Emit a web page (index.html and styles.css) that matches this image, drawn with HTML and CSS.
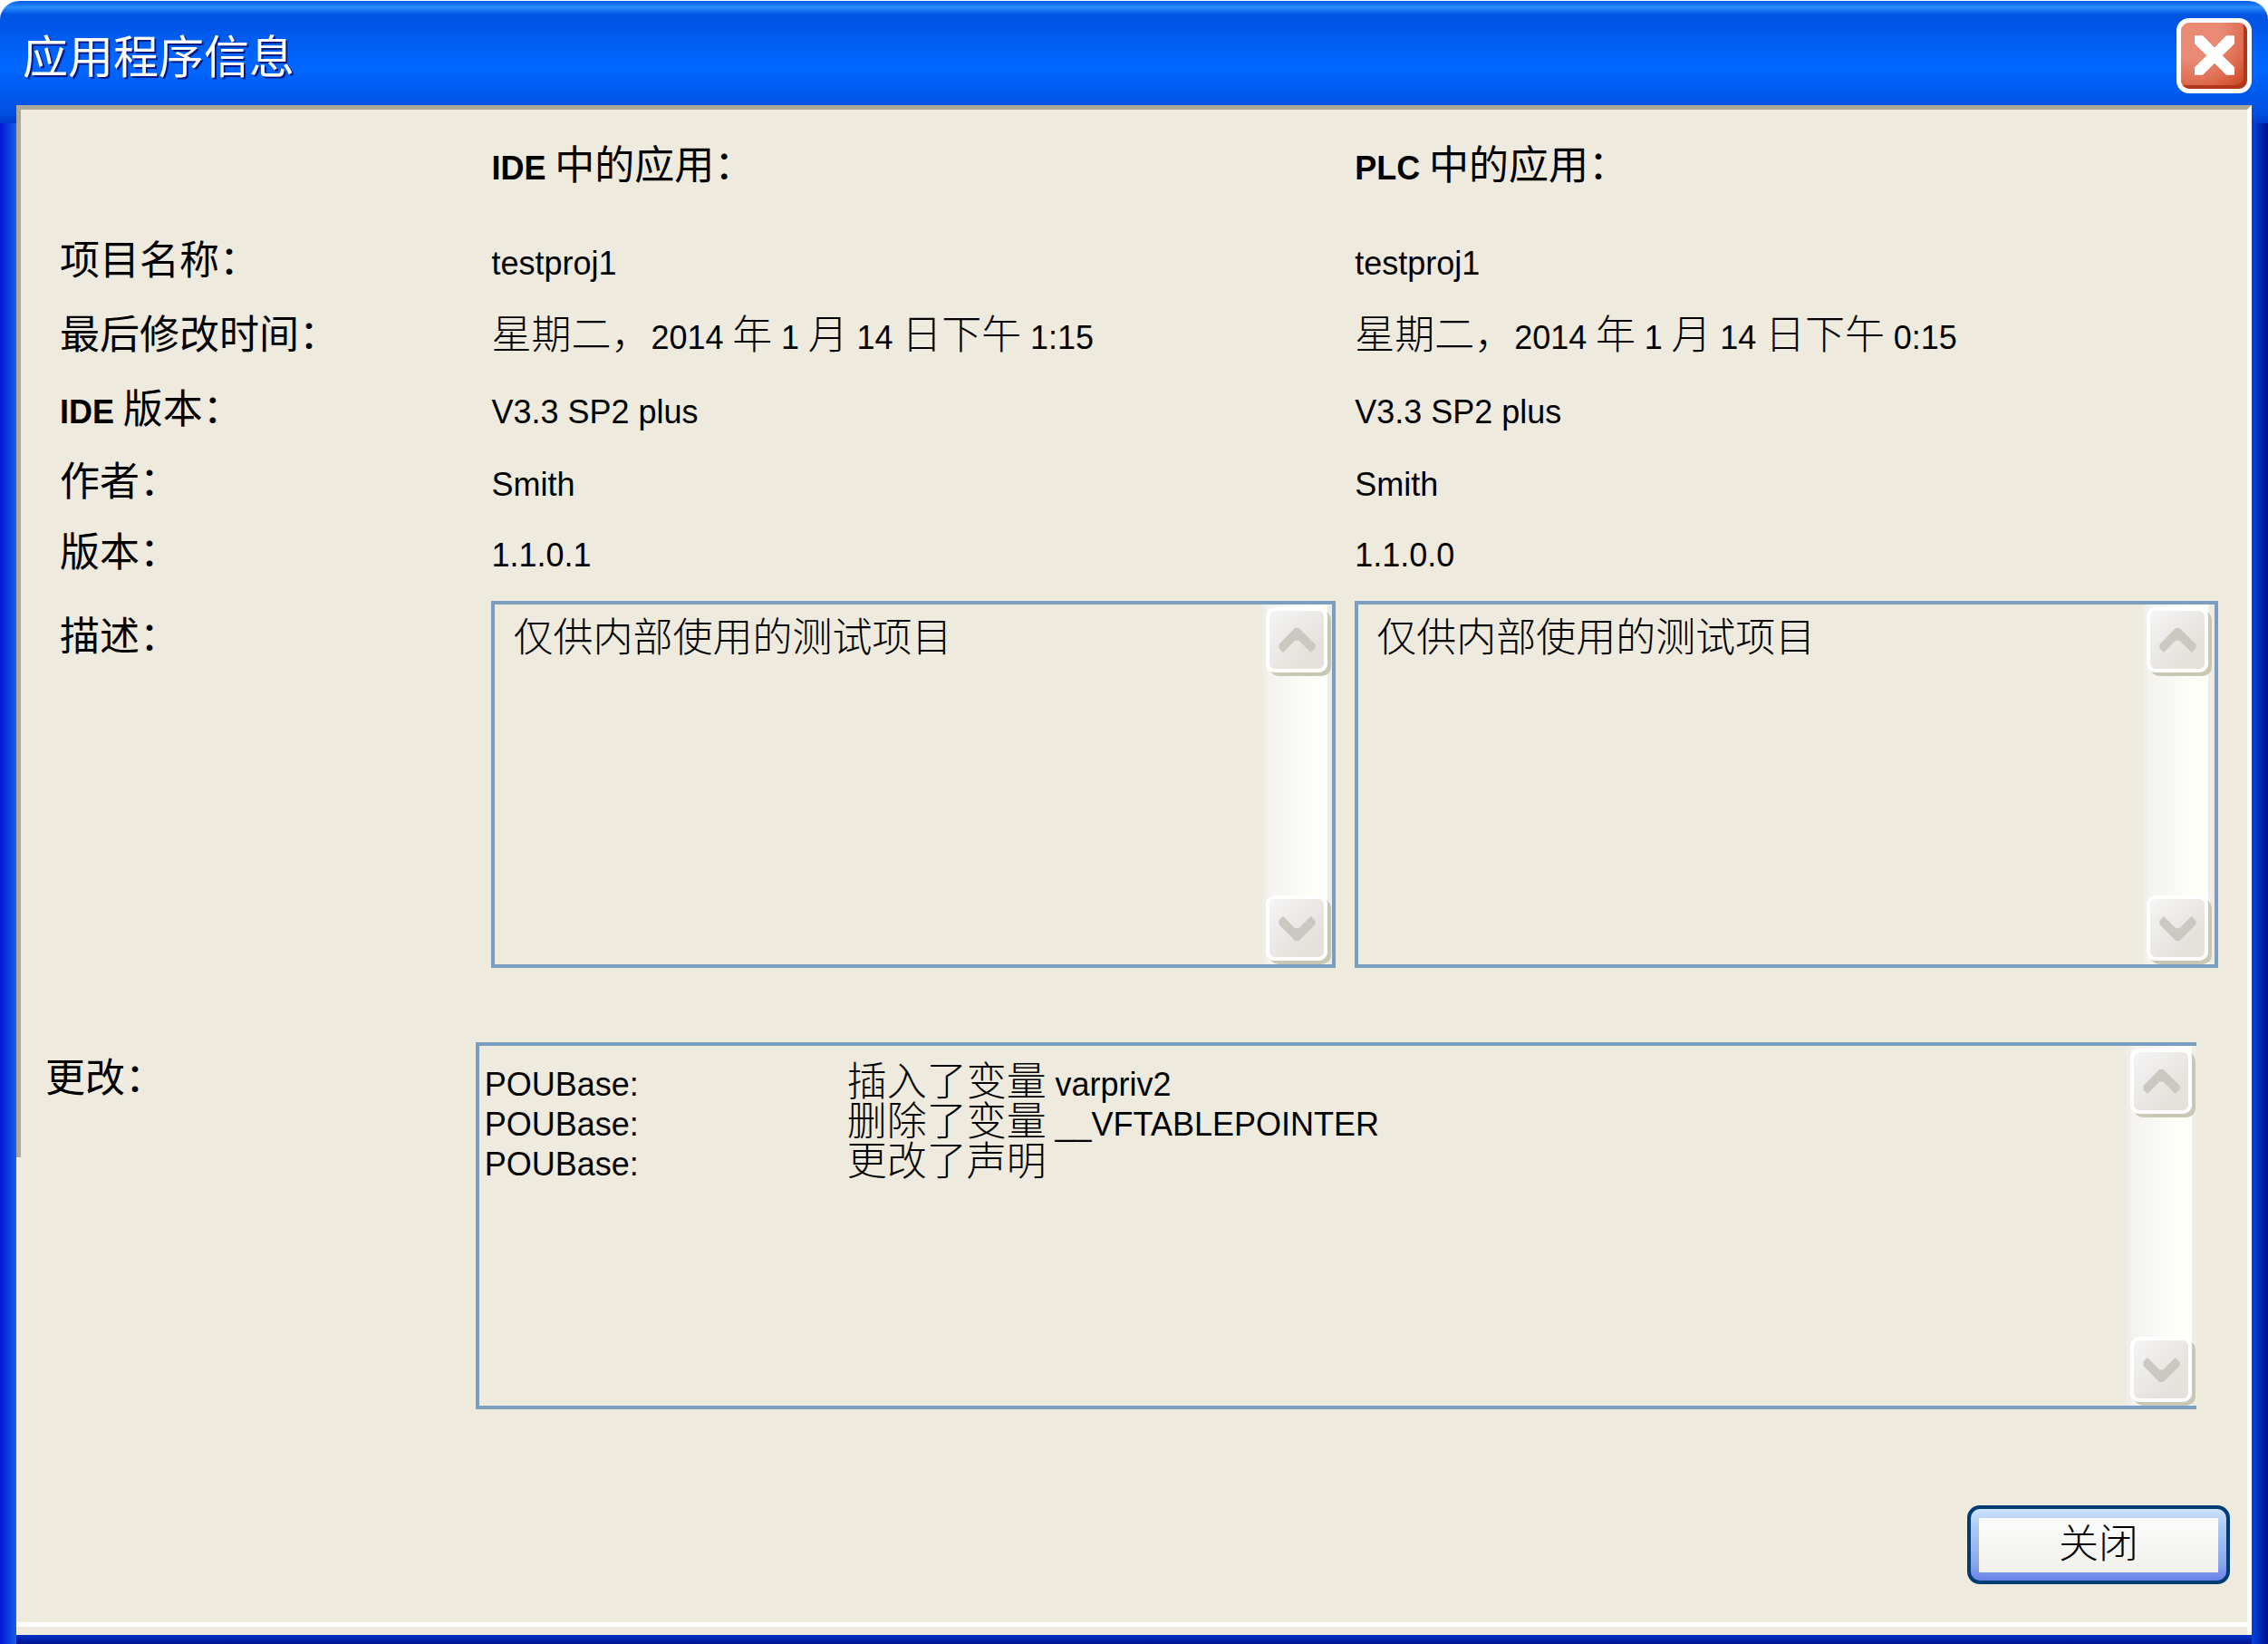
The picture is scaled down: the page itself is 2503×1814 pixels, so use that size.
FILE: index.html
```html
<!DOCTYPE html>
<html lang="zh-CN">
<head>
  <meta charset="UTF-8">
  <meta name="viewport" content="width=device-width, initial-scale=1.0">
  <title>应用程序信息</title>
  <link rel="stylesheet" href="styles.css">
</head>
<body>

  <svg class="symbols" aria-hidden="true">
    <symbol id="arrow-up" viewBox="0 0 122 82">
      <path d="M0 55 54 0H67L122 55V67L107 82 67 42H54L14 82 0 68Z"/>
    </symbol>
    <symbol id="arrow-down" viewBox="0 0 122 82">
      <path d="M0 27 54 82H67L122 27V15L107 0 67 40H54L14 0 0 14Z"/>
    </symbol>
  </svg>

  <div class="window">
    <header class="titlebar">
      <h1>应用程序信息</h1>
      <button type="button" class="close-icon" aria-label="关闭窗口">
        <svg viewBox="0 0 132 131"><path d="M0 0H27L66 40 105 0H132V27L92 66 132 105V131H105L66 92 27 131H0V105L40 66 0 27Z"/></svg>
      </button>
    </header>

    <main class="panel">
      <table class="info">
        <thead>
          <tr>
            <td></td>
            <th scope="col"><b class="en">IDE</b> 中的应用：</th>
            <th scope="col"><b class="en">PLC</b> 中的应用：</th>
          </tr>
        </thead>
        <tbody>
          <tr class="tall">
            <th scope="row">项目名称：</th>
            <td><span class="en">testproj1</span></td>
            <td><span class="en">testproj1</span></td>
          </tr>
          <tr class="tall">
            <th scope="row">最后修改时间：</th>
            <td>星期二，<span class="en">2014</span> 年 <span class="en">1</span> 月 <span class="en">14</span> 日下午 <span class="en">1:15</span></td>
            <td>星期二，<span class="en">2014</span> 年 <span class="en">1</span> 月 <span class="en">14</span> 日下午 <span class="en">0:15</span></td>
          </tr>
          <tr class="tall">
            <th scope="row"><b class="en">IDE</b> 版本：</th>
            <td><span class="en">V3.3 SP2 plus</span></td>
            <td><span class="en">V3.3 SP2 plus</span></td>
          </tr>
          <tr>
            <th scope="row">作者：</th>
            <td><span class="en">Smith</span></td>
            <td><span class="en">Smith</span></td>
          </tr>
          <tr>
            <th scope="row">版本：</th>
            <td><span class="en">1.1.0.1</span></td>
            <td><span class="en">1.1.0.0</span></td>
          </tr>
          <tr class="desc">
            <th scope="row" id="descLabel">描述：</th>
            <td>
              <div class="box">
                <textarea aria-labelledby="descLabel" readonly>仅供内部使用的测试项目</textarea>
                <div class="scrollbar">
                  <button type="button" aria-label="向上"><svg><use href="#arrow-up"/></svg></button>
                  <button type="button" aria-label="向下"><svg><use href="#arrow-down"/></svg></button>
                </div>
              </div>
            </td>
            <td>
              <div class="box inset">
                <textarea aria-labelledby="descLabel" readonly>仅供内部使用的测试项目</textarea>
                <div class="scrollbar">
                  <button type="button" aria-label="向上"><svg><use href="#arrow-up"/></svg></button>
                  <button type="button" aria-label="向下"><svg><use href="#arrow-down"/></svg></button>
                </div>
              </div>
            </td>
          </tr>
        </tbody>
      </table>

      <section class="changes">
        <h2>更改：</h2>
        <div class="box open">
          <div class="log">
            <table>
              <tr><td><span class="en">POUBase:</span></td><td>插入了变量 <span class="en">varpriv2</span></td></tr>
              <tr><td><span class="en">POUBase:</span></td><td>删除了变量 <span class="en">__VFTABLEPOINTER</span></td></tr>
              <tr><td><span class="en">POUBase:</span></td><td>更改了声明</td></tr>
            </table>
          </div>
          <div class="scrollbar">
            <button type="button" aria-label="向上"><svg><use href="#arrow-up"/></svg></button>
            <button type="button" aria-label="向下"><svg><use href="#arrow-down"/></svg></button>
          </div>
        </div>
      </section>

      <footer>
        <button type="button" class="close-button"><span>关闭</span></button>
      </footer>
    </main>
  </div>

</body>
</html>
```
FILE: styles.css
```css
* {
  box-sizing: border-box;
}

body {
  margin: 0;
  background: #fff;
  color: #000;
  font: 300 44px/44px "Noto Sans CJK SC", sans-serif;
}

button,
textarea {
  font: inherit;
  color: inherit;
}

button {
  padding: 0;
  cursor: pointer;
}

h1,
h2,
th {
  margin: 0;
  font-size: inherit;
  font-weight: 400;
  text-align: left;
}

/* latin text inside the chinese lines */
.en {
  font-family: "Liberation Sans", Arial, sans-serif;
  font-size: 36px;
  line-height: 24px;
}

.symbols {
  position: absolute;
  width: 0;
  height: 0;
}

/* window frame */
.window {
  display: flex;
  flex-direction: column;
  min-height: 100vh;
  padding: 0 18px 10px;
  border-top: 1px solid #fff;
  border-radius: 22px 22px 0 0;
  background:
    linear-gradient(#0058e6, #2a8fff 7px, #0054e3 15px, #0055e5 22px, #0066ff 68px, #0066ff 76px, #0054e8 112px, #0050e0 124px, #003dd0 135px) top / 100% 135px no-repeat,
    linear-gradient(#0030c8, #00138c) bottom / calc(100% - 36px) 10px no-repeat,
    linear-gradient(to right, #0019d0, #1560e8) left / 18px 100% no-repeat,
    linear-gradient(to right, #0044e0, #00138c) right / 18px 100% no-repeat;
}

.titlebar {
  display: flex;
  align-items: center;
  justify-content: space-between;
  height: 115px;
  padding: 5px 0 0 7px;
}

.titlebar h1 {
  padding-bottom: 4px;
  color: #fff;
  font-size: 50px;
  text-shadow: 2px 2px #0a1883;
}

.close-icon {
  display: flex;
  align-items: center;
  justify-content: center;
  width: 83px;
  height: 83px;
  border: 5px solid #fff;
  border-radius: 14px;
  background: radial-gradient(circle at 20% 15%, #ea8a74 35%, #de6d50 65%, #c63a14);
  box-shadow: inset -4px -4px #b2361a;
}

.close-icon svg {
  width: 44px;
  height: 44px;
  fill: #fff;
}

.panel {
  flex: 1;
  border-top: 5px solid #aca899;
  border-right: 5px solid #fff;
  background:
    linear-gradient(#aca899, #aca899) left top / 5px 1156px no-repeat,
    linear-gradient(#fff, #fff) left bottom 9px / 100% 5px no-repeat,
    #eeeade;
}

/* application info */
.info {
  width: 100%;
  padding: 17px 32px 0 48px;
  border-spacing: 0;
  table-layout: fixed;
}

.info th,
.info td {
  height: 78px;
  padding: 0;
}

.info thead td {
  width: 20%;
}

.info thead th,
.info thead td {
  height: 105px;
  padding-bottom: 23px;
}

.info .tall th,
.info .tall td {
  height: 82px;
}

.info .desc th,
.info .desc td {
  padding-top: 18px;
  vertical-align: top;
}

.info .desc th {
  padding-top: 32px;
}

.info .desc td:nth-child(2) {
  padding-right: 21px;
}

.box {
  display: flex;
  height: 405px;
  border: 4px solid #7a9ec0;
}

.box.inset {
  padding-right: 2px;
}

.box.open {
  flex: 1;
  border-right: 0;
}

.box textarea {
  flex: 1;
  min-width: 0;
  padding: 11px 20px;
  border: 0;
  outline: 0;
  background: none;
  resize: none;
  overflow: hidden;
}

.scrollbar {
  display: flex;
  flex-direction: column;
  justify-content: space-between;
  width: 77px;
  padding: 3px 5px 4px 4px;
  background: linear-gradient(to right, #efefe9 4px, #f5f2ee 5px, #f5f6f2 20px, #fbfbf7 45px, #fffffa 58px, #fffffa 72px, #eeeee6 72px);
}

.scrollbar button {
  display: flex;
  align-items: center;
  justify-content: center;
  height: 72px;
  border: 4px solid #fff;
  border-radius: 10px;
  background: linear-gradient(135deg, #f5f5f5, #e5e1dc 75%);
  box-shadow: 4px 4px #c9c8b4;
}

.scrollbar svg {
  width: 41px;
  height: 27px;
  fill: #c9c8c1;
}

/* changes */
.changes {
  display: flex;
  padding: 82px 56px 0 32px;
}

.changes h2 {
  width: 20%;
  padding-top: 14px;
}

.log {
  flex: 1;
  padding: 14px 6px;
}

.log table {
  border-spacing: 0;
}

.log td {
  height: 44px;
  padding: 0;
}

.log td:first-child {
  width: 400px;
}

footer {
  display: flex;
  justify-content: flex-end;
  padding: 106px 19px 46px;
}

.close-button {
  width: 290px;
  height: 87px;
  padding: 9px;
  border: 4px solid #003c74;
  border-radius: 14px;
  background: linear-gradient(#cbe2ff, #a9c6f5 30%, #8aa8ea 75%, #6a82ea);
}

.close-button span {
  display: block;
  padding: 3px 0 13px;
  background: linear-gradient(#fcfcfc, #f0f0ec);
}
```
